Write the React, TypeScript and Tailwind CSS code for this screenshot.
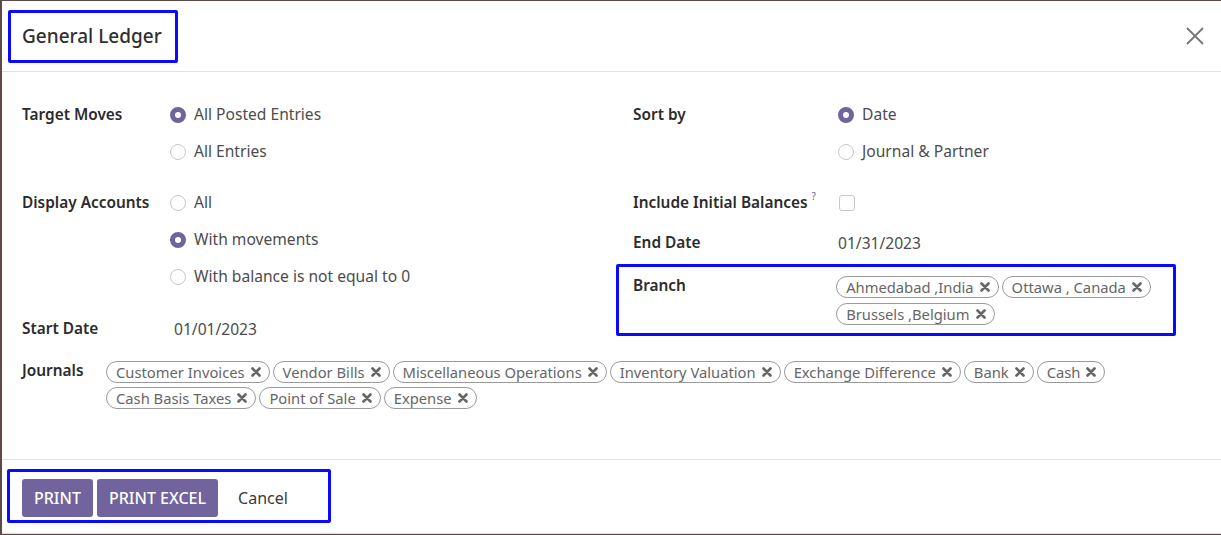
import React from 'react';

const font = { fontFamily: '"Noto Sans", "Open Sans", sans-serif' };

function Radio({ checked, label }: { checked?: boolean; label: string }) {
  return (
    <div className="flex items-center h-[37px]">
      {checked ? (
        <span className="w-4 h-4 rounded-full border-[5px] border-[#71639e] bg-white shrink-0" />
      ) : (
        <span className="w-4 h-4 rounded-full border border-[#c8c8c8] bg-white shrink-0" />
      )}
      <span className="ml-2 text-[15.6px] text-[#4c4c4c]">{label}</span>
    </div>
  );
}

function Tag({ label }: { label: string }) {
  return (
    <span className="inline-flex items-center h-[22px] pl-[9px] pr-[8px] rounded-full border border-[#9a9a9a] text-[14.75px] text-[#666] leading-none">
      {label}
      <svg className="ml-[6px]" width="10" height="10" viewBox="0 0 10 10">
        <path d="M1.5 1.5 L8.5 8.5 M8.5 1.5 L1.5 8.5" stroke="#666" strokeWidth="2.6" strokeLinecap="round" />
      </svg>
    </span>
  );
}

function Label({ children }: { children: React.ReactNode }) {
  return <span className="text-[15.4px] font-semibold text-[#2b2b2b]">{children}</span>;
}

export default function App() {
  const journals = [
    'Customer Invoices',
    'Vendor Bills',
    'Miscellaneous Operations',
    'Inventory Valuation',
    'Exchange Difference',
    'Bank',
    'Cash',
    'Cash Basis Taxes',
    'Point of Sale',
    'Expense',
  ];

  return (
    <div className="w-[1221px] h-[535px] bg-[#5b4a47] pl-[2px] pt-[1px] overflow-hidden" style={font}>
      <div className="bg-white h-[533px] flex flex-col border-b border-[#dcdcdc]">
        {/* Header */}
        <div className="h-[71px] shrink-0 flex items-center justify-between pl-[6px] pr-[16px] border-b border-[#e2e2e2]">
          <div className="border-[3px] border-[#0a0aff] rounded-[2px] h-[53px] w-[170px] flex items-center pl-[11px]">
            <span className="text-[19px] font-medium text-[#2f2f2f]">General Ledger</span>
          </div>
          <svg width="20" height="20" viewBox="0 0 20 20">
            <path d="M2 2 L18 18 M18 2 L2 18" stroke="#777" strokeWidth="1.8" />
          </svg>
        </div>

        {/* Body */}
        <div className="flex-1 pl-[20px] pr-[20px] pt-[24px]">
          <div className="flex">
            {/* Left group */}
            <div className="w-[611px] flex flex-col">
              <div className="flex">
                <div className="w-[148px] h-[37px] flex items-center"><Label>Target Moves</Label></div>
                <div className="flex flex-col">
                  <Radio checked label="All Posted Entries" />
                  <Radio label="All Entries" />
                </div>
              </div>
              <div className="flex mt-[14px]">
                <div className="w-[148px] h-[37px] flex items-center"><Label>Display Accounts</Label></div>
                <div className="flex flex-col">
                  <Radio label="All" />
                  <Radio checked label="With movements" />
                  <Radio label="With balance is not equal to 0" />
                </div>
              </div>
              <div className="flex mt-[15px] h-[37px] items-center">
                <div className="w-[152px]"><Label>Start Date</Label></div>
                <span className="text-[15.6px] text-[#4c4c4c] mt-[2px]">01/01/2023</span>
              </div>
            </div>

            {/* Right group */}
            <div className="flex-1 flex flex-col">
              <div className="flex">
                <div className="w-[205px] h-[37px] flex items-center"><Label>Sort by</Label></div>
                <div className="flex flex-col">
                  <Radio checked label="Date" />
                  <Radio label="Journal & Partner" />
                </div>
              </div>
              <div className="flex mt-[14px] h-[37px] items-center">
                <div className="w-[206px] flex items-start">
                  <Label>Include Initial Balances</Label>
                  <span className="text-[10px] text-[#71639e] ml-[4px] -mt-[2px]">?</span>
                </div>
                <span className="w-4 h-4 rounded-[3px] border border-[#c8c8c8] bg-white" />
              </div>
              <div className="flex h-[37px] items-center mt-[3px]">
                <div className="w-[205px]"><Label>End Date</Label></div>
                <span className="text-[15.6px] text-[#4c4c4c] mt-[2px]">01/31/2023</span>
              </div>
              <div className="-ml-[17px] w-[560px] h-[72px] mt-[3px] border-[3px] border-[#0a0aff] rounded-[2px] pl-[14px] pt-[9px] flex items-start">
                <div className="w-[205px] h-[22px] flex items-center -mt-[1px]"><Label>Branch</Label></div>
                <div className="flex flex-wrap content-start gap-x-[3px] gap-y-[5px] w-[340px]">
                  <Tag label="Ahmedabad ,India" />
                  <Tag label="Ottawa , Canada" />
                  <Tag label="Brussels ,Belgium" />
                </div>
              </div>
            </div>
          </div>

          {/* Journals */}
          <div className="flex mt-[13px]">
            <div className="w-[84px] h-[22px] flex items-center"><Label>Journals</Label></div>
            <div className="flex flex-wrap content-start gap-x-[3px] gap-y-[4px] w-[1010px] mt-[1px]">
              {journals.map((j) => (
                <Tag key={j} label={j} />
              ))}
            </div>
          </div>
        </div>

        {/* Footer */}
        <div className="h-[74px] shrink-0 border-t border-[#e2e2e2] pl-[5px] pt-[9px]">
          <div className="w-[324px] h-[54px] border-[3px] border-[#0a0aff] rounded-[2px] flex items-center pl-[12px] pt-[4px] gap-[4px]">
            <button className="h-[38px] px-[12px] rounded-[3px] bg-[#71639e] text-white text-[16px] font-medium">PRINT</button>
            <button className="h-[38px] px-[12px] rounded-[3px] bg-[#71639e] text-white text-[16px] font-medium">PRINT EXCEL</button>
            <button className="h-[38px] px-[16px] text-[16px] text-[#3a3a3a]">Cancel</button>
          </div>
        </div>
      </div>
    </div>
  );
}
